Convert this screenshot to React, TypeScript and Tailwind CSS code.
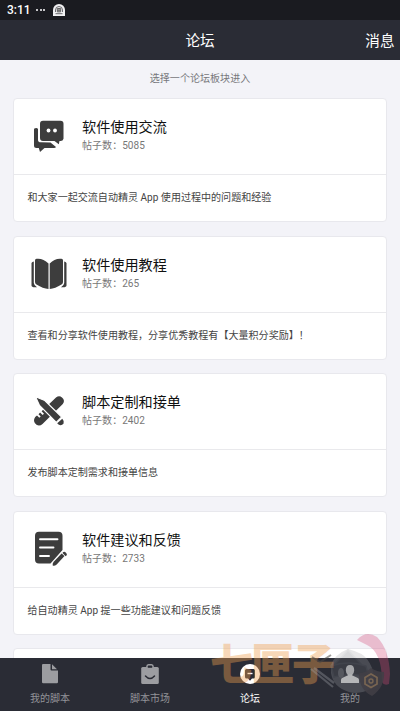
import React from 'react';

const ChatIcon = () => (
  <svg className="h-full w-full" viewBox="0 0 40 40" fill="#3d3d3d">
    <path d="M14 4.800h17.500a3 3 0 0 1 3 3v15a3 3 0 0 1-3 2.200h-1l-.7 3.200-4.300-3.200H14a3 3 0 0 1-3-3V7.800a3 3 0 0 1 3-3z" />
    <path d="M5.300 12.500q2.800-1 3.700.6V24q0 2.300 3 2.300l9.500.2 5.500 4.400q-.5 1-2 1H15.500l-4.500 4-1.200-4H7.500a2.500 2.500 0 0 1-2.500-2.500V13.500z" />
    <circle cx="19.500" cy="14.500" r="1.900" fill="#fff" />
    <circle cx="26" cy="14.500" r="1.900" fill="#fff" />
  </svg>
);

const BookIcon = () => (
  <svg className="h-full w-full" viewBox="0 0 40 40" fill="#3d3d3d">
    <path d="M7.500 4.800Q14 4 19.500 9.500V35Q14 34.500 7.500 30.500q-1.500-.8-1.500-2.500V6.500q0-1.500 1.500-1.700z" />
    <path d="M32.500 4.800Q26 4 20.700 9.500V35Q26 34.500 32.500 30.500q1.500-.8 1.500-2.500V6.500q0-1.500-1.500-1.700z" />
    <path d="M4.800 7.500V29q0 2 3.200 4.200-5.500.6-5.500-1.700V9q.7-1.300 2.300-1.500zM35.200 7.500V29q0 2-3.200 4.200 5.500.6 5.500-1.700V9q-.7-1.300-2.300-1.500z" />
  </svg>
);

const ToolsIcon = () => (
  <svg className="h-full w-full" viewBox="0 0 40 40" fill="#3d3d3d">
    <path d="M6.200 26l1.800-1.500 2.300 2.300 1.400-1.400-2.200-2.200 1.600-1.600 2.500 2.500 1.400-1.400-2.400-2.400L27 6.500q3.200-2.500 6 0 3.500 3 .8 6.500L13.500 33q-3 2.700-6 .8-4.300-3.500-1.300-7.800z" />
    <path d="M6.500 5.800l9.300 3.700L32.700 26l-5.400 5.500-16.800-17z" stroke="#fff" strokeWidth="1.200" />
    <path d="M33.300 27.800q2.200 2.200 1.200 4.900-2.300 2.500-5 .8l-1.300-1.300z" />
  </svg>
);

const NoteIcon = () => (
  <svg className="h-full w-full" viewBox="0 0 40 40" fill="#3d3d3d">
    <path d="M10 2.800h19.500a4 4 0 0 1 4 4V21L21.500 34.500H10a4 4 0 0 1-4-4V6.800a4 4 0 0 1 4-4z" />
    <path d="M11 10.200h17.500M11 18.500h13.500M11 27h9" stroke="#fff" strokeWidth="1.900" strokeLinecap="round" />
    <path d="M32.600 24.500l2.900 2.600-7.800 8.300q-2.200 1.900-4 1.100-.4-2 1-3.700z" />
    <path d="M34 23.200q1.400-1 3 .6 1.600 1.500.5 2.600l-.8.800-3.200-3.200z" />
  </svg>
);

const boards = [
  { title: '软件使用交流', posts: '5085', text: '和大家一起交流自动精灵 App 使用过程中的问题和经验', icon: <ChatIcon /> },
  { title: '软件使用教程', posts: '265', text: '查看和分享软件使用教程，分享优秀教程有【大量积分奖励】！', icon: <BookIcon /> },
  { title: '脚本定制和接单', posts: '2402', text: '发布脚本定制需求和接单信息', icon: <ToolsIcon /> },
  { title: '软件建议和反馈', posts: '2733', text: '给自动精灵 App 提一些功能建议和问题反馈', icon: <NoteIcon /> },
];

const tabs = [
  {
    label: '我的脚本',
    icon: (
      <svg className="h-5 w-5" viewBox="0 0 20 20" fill="#9c9da1">
        <path d="M3 0h7.500v5.500q0 1 1 1H18V18a1.200 1.200 0 0 1-1.200 1.200H3.200A1.200 1.200 0 0 1 2 18V1.200Q2 0 3 0z" />
        <path d="M12 .3l5 5h-5z" />
      </svg>
    ),
  },
  {
    label: '脚本市场',
    icon: (
      <svg className="h-5 w-5" viewBox="0 0 20 20">
        <rect x="1.200" y="3" width="17.600" height="17" rx="1.500" fill="#9c9da1" />
        <path d="M7 4.500V2.500Q7 .8 8.500.8h3q1.500 0 1.500 1.700v2" fill="none" stroke="#9c9da1" strokeWidth="1.600" />
        <path d="M7.800 2.200h4.400v1.600H7.800z" fill="#2a2c35" />
        <path d="M5.500 12q4.500 5 9 0" fill="none" stroke="#2a2c35" strokeWidth="1.500" strokeLinecap="round" />
      </svg>
    ),
  },
  {
    label: '论坛',
    icon: (
      <svg className="h-5 w-5" viewBox="0 0 20 20">
        <circle cx="10" cy="10" r="10" fill="#fff" />
        <path d="M6.500 5h7A1.500 1.500 0 0 1 15 6.500V13a1.500 1.500 0 0 1-1.500 1.500H12l-2 2.200-2-2.200H6.500A1.500 1.500 0 0 1 5 13V6.500A1.500 1.500 0 0 1 6.500 5z" fill="#2a2c35" />
        <path d="M7.500 9.500h5" stroke="#fff" strokeWidth="1.400" />
      </svg>
    ),
  },
  {
    label: '我的',
    icon: (
      <svg className="h-5 w-5" viewBox="0 0 20 20" fill="#bcbdbe">
        <path d="M10 1q4.200 0 4.200 5.200 0 3-2.200 5.100l5.800 2.600q1.200.7 1.200 2V19H1v-3.100q0-1.300 1.200-2L8 11.300Q5.800 9.200 5.800 6.200 5.800 1 10 1z" />
      </svg>
    ),
  },
];

function Watermark() {
  return (
    <div className="pointer-events-none absolute top-[630px] left-[200px] h-[81px] w-[200px]">
      <div className="absolute top-[7px] left-[10px] text-[43px] leading-[56px] font-black tracking-[-2px] whitespace-nowrap text-[#f0a050] opacity-40">
        七匣子
      </div>
      <svg className="absolute inset-0 h-full w-full" viewBox="200 630 200 81">
        <path d="M357 640q9-10 20-3 12 12 13 37l-1 10q-5 2-7-2 0-30-15-37z" fill="#d64d78" opacity=".33" />
        <g opacity=".26">
          <path d="M331 665q4-11 17-16 15 4 19 10 10 13 5 29-12 7-23 4-16-5-18-19z" fill="#a4a6aa" />
          <path d="M331 666q17-6 35 0l3 11q-16-5-35 0zM334 665l14-15 14 15" fill="#686b72" stroke="#858990" strokeWidth="1.500" />
          <ellipse cx="341" cy="673" rx="3" ry="5" fill="#d4d6d9" />
        </g>
        <path d="M312 657l8 5 11-7" fill="none" stroke="#4c4846" strokeWidth="2" opacity=".55" />
        <path d="M311 669l22 18M314 668l20 15" fill="none" stroke="#a3a5ab" strokeWidth="2.200" opacity=".35" />
        <path d="M371 668q6 4 13 4 1 15-12 24-13-6-13-23 7 0 12-5z" fill="#413f45" opacity=".88" />
        <path d="M371 674l6 3.500v6.500l-6 3.500-6-3.500v-6.500z" fill="none" stroke="#8b7155" strokeWidth="1.700" opacity=".75" />
        <circle cx="371" cy="681" r="2" fill="none" stroke="#8b7155" strokeWidth="1.400" opacity=".75" />
      </svg>
    </div>
  );
}

export default function App() {
  return (
    <div className="relative flex h-[711px] w-[400px] flex-col overflow-hidden bg-[#f3f3f8] font-[Roboto,'Noto_Sans_CJK_SC',sans-serif]">
      <div className="flex h-5 shrink-0 items-center bg-[#1a1b20] pl-[7px] text-[12px] font-medium text-white">
        <span className="w-[29px]">3:11</span>
        <span className="flex w-[17px] gap-[1.500px]">
          <i className="size-[2px] rounded-full bg-white" />
          <i className="size-[2px] rounded-full bg-white" />
          <i className="size-[2px] rounded-full bg-white" />
        </span>
        <svg className="size-3" viewBox="0 0 12 12">
          <path d="M0 12V6a6 6 0 0 1 12 0v6z" fill="#f1f1f2" />
          <path d="M2.500 8V6a3.500 3.500 0 0 1 7 0v2M2.500 9.700h7" fill="none" stroke="#47484c" strokeWidth=".8" />
          <path d="M4.300 4.500h3.400v3.400H4.300zM6 4.500v3.400M4.300 6.200h3.400" fill="none" stroke="#333" strokeWidth=".7" />
        </svg>
      </div>
      <header className="grid h-10 shrink-0 grid-cols-3 items-center bg-[#2a2c35] pt-[3px] text-[14.600px] text-white">
        <span />
        <h1 className="text-center">论坛</h1>
        <span className="pr-[5.500px] text-right">消息</span>
      </header>
      <main className="h-[597.500px] shrink-0 overflow-hidden px-[13px]">
        <p className="h-[38px] text-center text-[10.050px] leading-[38px] text-[#77777b]">选择一个论坛板块进入</p>
        <div className="flex flex-col gap-[13.500px]">
          {boards.map((board) => (
            <section key={board.title} className="h-[124px] shrink-0 rounded-[4px] border border-[#e8e8ed] bg-white">
              <div className="flex h-[76px] items-center border-b border-[#e9e9ec] pl-[15px]">
                <div className="-mt-px h-10 w-10 shrink-0">{board.icon}</div>
                <div className="ml-[13px]">
                  <h2 className="text-[14.150px] leading-[19px] text-[#111]">{board.title}</h2>
                  <p className="text-[10.050px] leading-[18px] text-[#777]">帖子数：{board.posts}</p>
                </div>
              </div>
              <p className="pl-[13.500px] text-[10.050px] leading-[45px] whitespace-nowrap text-[#444]">{board.text}</p>
            </section>
          ))}
          <section className="h-[124px] shrink-0 rounded-[4px] border border-[#e8e8ed] bg-white" />
        </div>
      </main>
      <nav className="grid h-[53.500px] shrink-0 grid-cols-4 bg-[#2a2c35] pt-[6px] text-[10px]">
        {tabs.map((tab) => (
          <div key={tab.label} className={`flex flex-col items-center ${tab.label === '论坛' ? 'text-white' : 'text-[#929398]'}`}>
            {tab.icon}
            <span className="mt-[6px] leading-[18px]">{tab.label}</span>
          </div>
        ))}
      </nav>
      <Watermark />
    </div>
  );
}
